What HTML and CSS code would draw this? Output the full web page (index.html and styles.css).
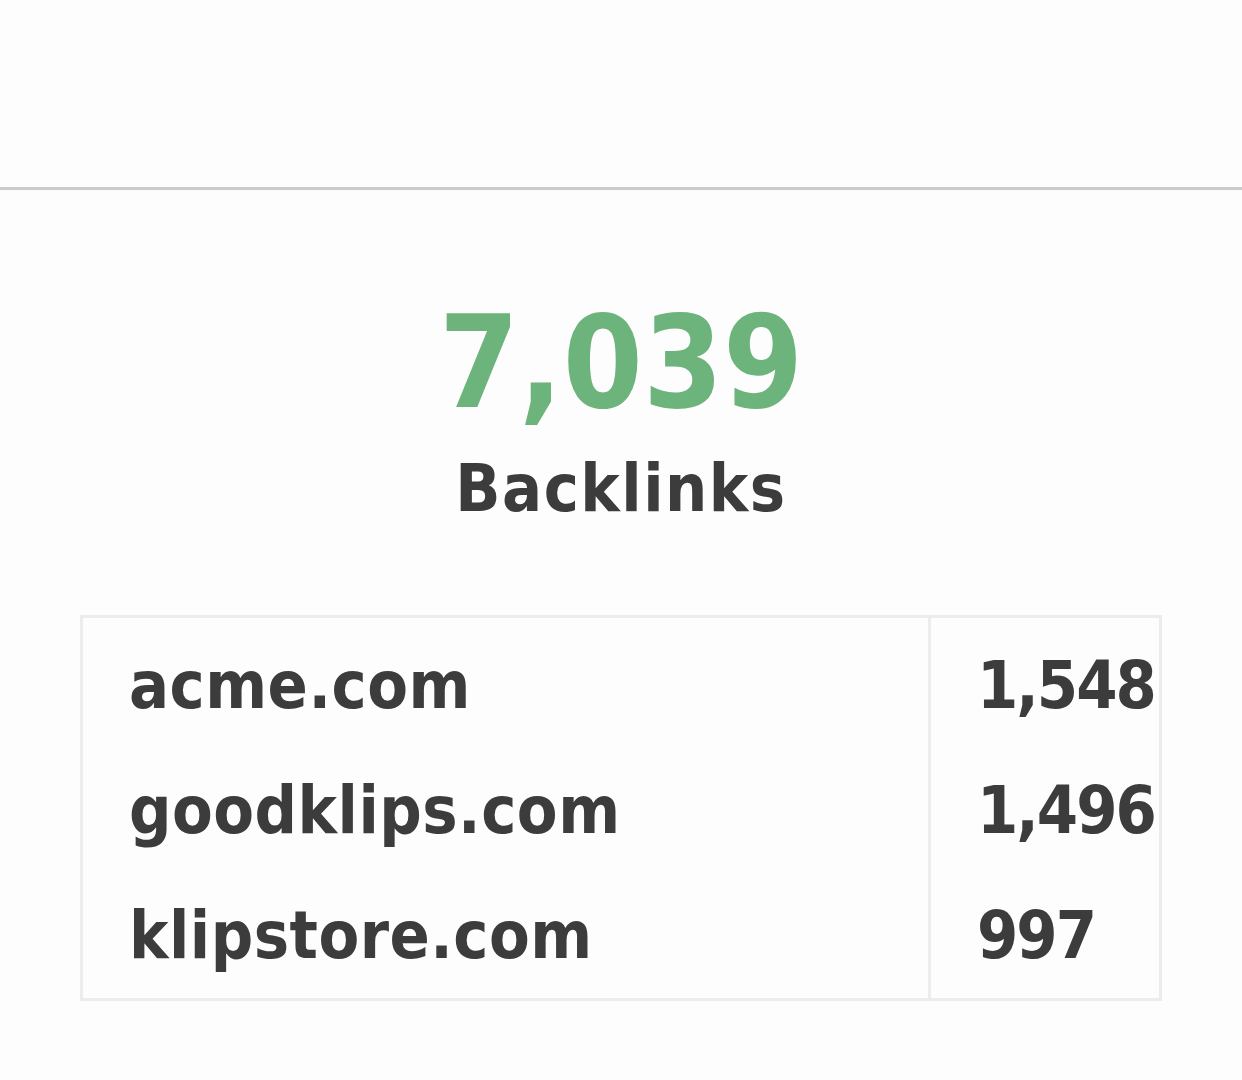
FILE: index.html
```html
<!DOCTYPE html>
<html lang="en">
<head>
    <meta charset="UTF-8">
    <title>Backlinks</title>
    <link rel="stylesheet" href="styles.css">
</head>
<body>
    <div class="klip-header"></div>

    <div class="klip-body">
        <div class="metric">
            <div class="metric-value">7,039</div>
            <div class="metric-label">Backlinks</div>
        </div>

        <table class="ref-table">
            <tr>
                <td class="domain">acme.com</td>
                <td class="count">1,548</td>
            </tr>
            <tr>
                <td class="domain">goodklips.com</td>
                <td class="count">1,496</td>
            </tr>
            <tr>
                <td class="domain">klipstore.com</td>
                <td class="count">997</td>
            </tr>
        </table>
    </div>
</body>
</html>
```

FILE: styles.css
```css
* {
    margin: 0;
    padding: 0;
    box-sizing: border-box;
}

body {
    font-family: 'DejaVu Sans Condensed', 'DejaVu Sans', sans-serif;
    font-weight: bold;
    background: #fdfdfd;
    color: #3c3c3c;
    overflow: hidden;
}

.klip-header {
    height: 190px;
    border-bottom: 3px solid #cbcbcb;
}

.klip-body {
    padding: 0 80px;
}

.metric {
    text-align: center;
    padding-top: 109px;
}

.metric-value {
    font-size: 128px;
    line-height: 1;
    color: #6cb47c;
}

.metric-label {
    font-size: 66px;
    line-height: 1;
    letter-spacing: 1.5px;
    margin-top: 29px;
}

.ref-table {
    width: 100%;
    margin-top: 93px;
    table-layout: fixed;
    border-collapse: collapse;
    border: 3px solid #ececec;
    font-size: 66px;
    letter-spacing: 0.5px;
}

.ref-table td {
    height: 126px;
    padding: 10px 0 0 46px;
    white-space: nowrap;
}

/* a little more room under the last row */
.ref-table tr:last-child td {
    height: 131px;
    padding-bottom: 5px;
}

.ref-table .count {
    width: 231px;
    border-left: 3px solid #ececec;
    letter-spacing: -2px;
}
```
